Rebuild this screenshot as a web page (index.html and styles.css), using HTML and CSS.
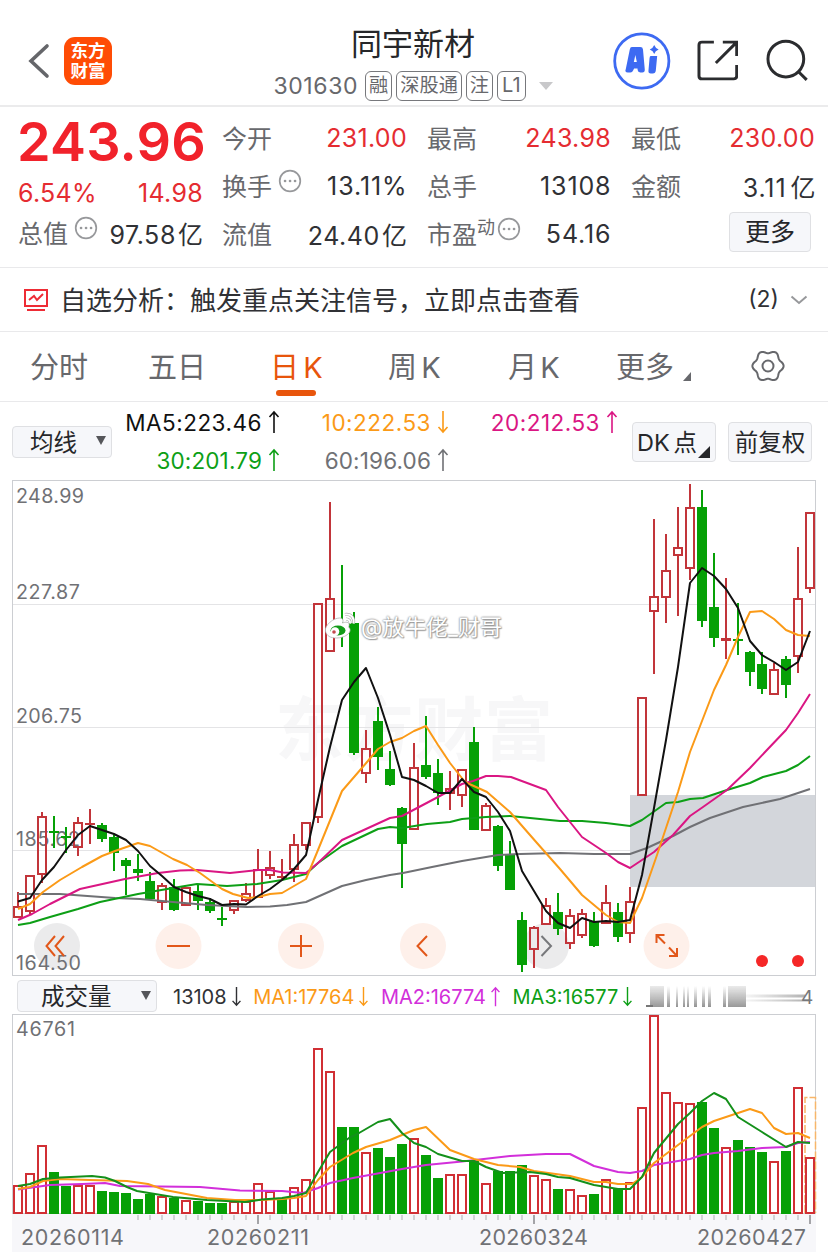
FILE: index.html
```
<!DOCTYPE html>
<html lang="zh-CN">
<head>
    <meta charset="UTF-8">
    <meta name="viewport" content="width=device-width, initial-scale=1.0">
    <title>同宇新材 301630</title>
    <link rel="stylesheet" href="styles.css">
</head>
<body>
    <header class="header">
        <div class="header-left">
            <svg class="back" width="22" height="36" viewBox="0 0 22 36"><path d="M19 3 L3 18 L19 33"/></svg>
            <div class="logo"><span>东方</span><span>财富</span></div>
        </div>
        <div class="title">
            <h1>同宇新材</h1>
            <div class="code">
                <span class="num">301630</span>
                <span class="tag">融</span>
                <span class="tag">深股通</span>
                <span class="tag">注</span>
                <span class="tag l1">L1</span>
                <i class="caret"></i>
            </div>
        </div>
        <div class="header-right">
            <svg width="58" height="58" viewBox="0 0 58 58">
                <circle cx="29" cy="29" r="27.3" fill="none" stroke="#3d6af2" stroke-width="2.8"/>
                <path d="M19 15h8.500q2.500 0 2.700 2.500l1.800 20q.2 3-2.500 3h-2q-2.500 0-2.700-2.500l-.1-1.500h-3.500l-.8 1.800q-.9 2.200-3 2.200h-2.500q-3.500 0-2-3.500l4-19.500q.5-2.500 2.100-2.500zM22.500 23l-1.500 7h3z" fill="#3d6af2" fill-rule="evenodd"/>
                <path d="M38 24h6.500l-1.400 14.500q-.3 3-3 3h-2q-2.700 0-2.400-2.800l1.100-12.500q.2-2.200 1.200-2.200zM41.500 13q1 3 4.500 4.500q-3.500 1.500-4.500 4.500q-1-3-4.500-4.500q3.500-1.500 4.500-4.500z" fill="#3d6af2"/>
            </svg>
            <svg class="line-icon" width="42" height="42" viewBox="0 0 42 42">
                <path d="M17 2H5Q2 2 2 5V36Q2 39 5 39H37Q40 39 40 36V25M26 2H40V16M39 3L19 23"/>
            </svg>
            <svg class="line-icon" width="44" height="44" viewBox="0 0 44 44">
                <circle cx="21" cy="20" r="18"/><path d="M33 32L42 41"/>
            </svg>
        </div>
    </header>

    <section class="quote">
        <div class="price-col">
            <div class="price">243.96</div>
            <div class="pair red"><span>6.54%</span><span>14.98</span></div>
            <div class="pair"><span class="label">总值<svg class="dots" viewBox="0 0 24 24"><circle cx="12" cy="12" r="10.300"/><path d="M7 12h.1M12 12h.1M17 12h.1"/></svg></span><span class="mid">97.58<b>亿</b></span></div>
        </div>
        <div class="stats">
            <div class="pair"><span class="label">今开</span><span class="red">231.00</span></div>
            <div class="pair"><span class="label">最高</span><span class="red">243.98</span></div>
            <div class="pair"><span class="label">最低</span><span class="red">230.00</span></div>
            <div class="pair"><span class="label">换手<svg class="dots" viewBox="0 0 24 24"><circle cx="12" cy="12" r="10.300"/><path d="M7 12h.1M12 12h.1M17 12h.1"/></svg></span><span class="wide">13.11%</span></div>
            <div class="pair"><span class="label">总手</span><span class="wide">13108</span></div>
            <div class="pair"><span class="label">金额</span><span class="wide">3.11<b>亿</b></span></div>
            <div class="pair"><span class="label">流值</span><span class="mid">24.40<b>亿</b></span></div>
            <div class="pair"><span class="label">市盈<small>动</small><svg class="dots tight" viewBox="0 0 24 24"><circle cx="12" cy="12" r="10.300"/><path d="M7 12h.1M12 12h.1M17 12h.1"/></svg></span><span class="wide">54.16</span></div>
            <div class="pair end"><button class="btn more">更多</button></div>
        </div>
    </section>

    <section class="notice">
        <svg width="26" height="24" viewBox="0 0 26 24"><path d="M2 2H24V18H2ZM4 22H22M6 12L11 8L14 12L20 6"/></svg>
        <p>自选分析：触发重点关注信号，立即点击查看</p>
        <span class="count">(2)</span>
        <svg class="chev" width="18" height="10" viewBox="0 0 18 10"><path d="M1.500 1.500L9 8L16.500 1.500"/></svg>
    </section>

    <nav class="tabs">
        <a>分时</a>
        <a>五日</a>
        <a class="active">日 K</a>
        <a>周 K</a>
        <a>月 K</a>
        <a class="has-corner">更多</a>
        <svg id="gear" width="34" height="34" viewBox="-17 -17 34 34"><path/><circle r="5.500"/></svg>
    </nav>

    <section class="ma-bar">
        <button class="btn select small">均线<i></i></button>
        <div class="ma-list">
            <span class="c-black">MA5:223.46<svg class="arrow" viewBox="0 0 12 24"><path d="M6 23V2M1.500 7L6 2L10.500 7"/></svg></span>
            <span class="c-orange">10:222.53<svg class="arrow" viewBox="0 0 12 24"><path d="M6 1V22M1.500 17L6 22L10.500 17"/></svg></span>
            <span class="c-pink">20:212.53<svg class="arrow" viewBox="0 0 12 24"><path d="M6 23V2M1.500 7L6 2L10.500 7"/></svg></span>
            <span class="c-green">30:201.79<svg class="arrow" viewBox="0 0 12 24"><path d="M6 23V2M1.500 7L6 2L10.500 7"/></svg></span>
            <span class="c-grey">60:196.06<svg class="arrow" viewBox="0 0 12 24"><path d="M6 23V2M1.500 7L6 2L10.500 7"/></svg></span>
        </div>
        <button class="btn dk">DK 点</button>
        <button class="btn fq">前复权</button>
    </section>

    <svg class="chart" width="828" height="496" viewBox="0 480 828 496">
        <text class="brand" x="275" y="755" textLength="278">东方财富</text>
        <path class="grid" d="M13 604.500H815M13 727.500H815M13 850.500H815"/>
        <rect x="630" y="795" width="185" height="92" fill="#d3d6db"/>
        <g class="nav-btns">
            <g fill="#ebebec"><circle cx="57" cy="946" r="23"/><circle cx="546" cy="946" r="23"/></g>
            <g fill="#fef0ea"><circle cx="178.500" cy="946" r="23"/><circle cx="301" cy="946" r="23"/><circle cx="423" cy="946" r="23"/><circle cx="666.500" cy="946" r="23"/></g>
        </g>
        <g class="axis-label">
            <text x="16" y="503" textLength="68">248.99</text>
            <text x="16" y="598.500" textLength="64">227.87</text>
            <text x="16" y="722.500" textLength="66">206.75</text>
            <text x="16" y="845.500" textLength="64">185.62</text>
            <text x="16" y="969.500" textLength="65">164.50</text>
        </g>
        <g id="candles"></g>
        <g id="maLines" class="lines"></g>
        <g class="nav-icons">
            <path d="M55 936L46.500 946L55 956M64 936L55.500 946L64 956M167 946H190M290 946H312M301 935V957M427 936L417.500 946L427 956"/>
            <path d="M656.500 943V935H664.500M657 935.500L665 943.500M669 947.500L676.500 955.500M669 956H677V948"/>
            <path class="off" d="M541.500 936L551 946L541.500 956"/>
        </g>
        <circle cx="762" cy="961" r="6" fill="#f52727"/>
        <circle cx="798" cy="961" r="6" fill="#f52727"/>
        <rect class="frame" x="12.500" y="480.500" width="803" height="495"/>
        <g class="weibo">
            <path d="M325.500 631c-1-6 8-13 14-13c4 0 4 3 3 5c5-2 8 0 6 4c5 4-2 11-12 11c-6 0-10-2-11-7z" fill="#fff" stroke="#aaa" stroke-width=".7"/>
            <ellipse cx="338" cy="630.500" rx="7.500" ry="5" fill="#129b18"/>
            <circle cx="335" cy="631.500" r="4.300" fill="#fff"/>
            <circle cx="334" cy="632" r="1.800" fill="#c2484d"/>
            <path d="M345 614.500c6-1 9.500 3 8.500 9M346 619c3 0 4.500 2 4 4.500" fill="none" stroke="#aaa" stroke-width="3"/>
            <path d="M345 614.500c6-1 9.500 3 8.500 9M346 619c3 0 4.500 2 4 4.500" fill="none" stroke="#fff" stroke-width="1.800"/>
            <text x="361" y="635" textLength="141">@放牛佬_财哥</text>
        </g>
    </svg>

    <section class="vol-bar">
        <button class="btn select vol">成交量<i></i></button>
        <span class="c-dark">13108<svg class="arrow" viewBox="0 0 12 24"><path d="M6 1V22M1.500 17L6 22L10.500 17"/></svg></span>
        <span class="c-orange">MA1:17764<svg class="arrow" viewBox="0 0 12 24"><path d="M6 1V22M1.500 17L6 22L10.500 17"/></svg></span>
        <span class="c-purple">MA2:16774<svg class="arrow" viewBox="0 0 12 24"><path d="M6 23V2M1.500 7L6 2L10.500 7"/></svg></span>
        <span class="c-green">MA3:16577<svg class="arrow" viewBox="0 0 12 24"><path d="M6 1V22M1.500 17L6 22L10.500 17"/></svg></span>
        <svg class="smear" width="168" height="24" viewBox="646 984 168 24">
            <defs>
                <linearGradient id="fade" x2="0" y2="1"><stop offset="0" stop-color="#888" stop-opacity="0"/><stop offset="1" stop-color="#777" stop-opacity=".8"/></linearGradient>
                <linearGradient id="side"><stop offset="0" stop-color="#999" stop-opacity=".1"/><stop offset="1" stop-color="#888" stop-opacity=".7"/></linearGradient>
                <filter id="soft"><feGaussianBlur stdDeviation=".7"/></filter>
            </defs>
            <g filter="url(#soft)">
                <path fill="url(#fade)" d="M650 985h14v21h-14zM667 985h3v21h-3zM676 985h2v21h-2zM683 985h2v21h-2zM687 985h2v21h-2zM694 985h3v21h-3zM702 985h3v21h-3zM708 985h3v21h-3zM723 985h3v21h-3zM728 985h18v21h-18z"/>
                <path fill="#aaa" opacity=".25" d="M650 985h14v21h-14zM728 985h18v21h-18z"/>
                <path fill="#777" d="M646 1004h7v2h-7z"/>
                <path fill="url(#side)" d="M746 993.500h59v3h-59zM746 998.500h64v2h-64z"/>
            </g>
            <text x="801" y="1003">4</text>
        </svg>
    </section>

    <svg class="chart" width="828" height="238" viewBox="0 1014 828 238">
        <rect x="12" y="1214" width="804" height="38" fill="#f7f7fa"/>
        <rect class="frame" x="12.500" y="1014.500" width="803" height="199"/>
        <text class="axis-label" x="16" y="1035.500" textLength="59">46761</text>
        <path d="M805 1213V1097.500H815.500V1213" fill="none" stroke="#f8b66a" stroke-width="1.500" stroke-dasharray="8 2"/>
        <g id="volumes"></g>
        <g id="volLines" class="lines"></g>
        <g id="ticks"></g>
        <g class="date">
            <text x="21" y="1245" textLength="103">20260114</text>
            <text x="207" y="1245" textLength="102">20260211</text>
            <text x="479" y="1245" textLength="109">20260324</text>
            <text x="697" y="1245" textLength="109">20260427</text>
        </g>
    </svg>

    <script src="chart.js"></script>
</body>
</html>
```
FILE: styles.css
```
* {
    box-sizing: border-box;
}

body {
    margin: 0;
    width: 828px;
    height: 1252px;
    overflow: hidden;
    background: #fff;
    color: #303135;
    font-family: Inter, "Noto Sans CJK SC", sans-serif;
    font-size: 25px;
}

.header {
    display: flex;
    height: 107px;
    padding: 0 19px 0 28px;
    border-bottom: 2px solid #ebebec;
}

.header-left, .header-right {
    display: flex;
    align-items: center;
    padding-top: 17px;
    width: 196px;
}

.header-left {
    width: 246px;
}

.header-right {
    gap: 26px;
    margin-left: auto;
}

.header-right svg:last-child {
    margin-left: 1px;
}

.back {
    fill: none;
    stroke: #65666a;
    stroke-width: 3.600;
    stroke-linecap: round;
}

.logo {
    display: flex;
    flex-direction: column;
    justify-content: center;
    align-items: center;
    width: 48px;
    height: 48px;
    margin-left: 14px;
    border-radius: 11px;
    background: #ff4c05;
    color: #fff;
    font-size: 17.5px;
    font-weight: 700;
    line-height: 20px;
}

.line-icon {
    fill: none;
    stroke: #2b2c2f;
    stroke-width: 3;
}

.title {
    display: flex;
    flex-direction: column;
    align-items: center;
    width: 278px;
    padding-top: 26px;
}

.title h1 {
    margin: 0;
    font-size: 31px;
    font-weight: 400;
    line-height: 36px;
    color: #26272a;
}

.code {
    display: flex;
    align-items: center;
    gap: 4px;
    height: 30px;
    margin-top: 9px;
    color: #67686c;
    white-space: nowrap;
}

.num {
    font-size: 23px;
    letter-spacing: .6px;
    margin-right: 3px;
}

.tag {
    flex: none;
    height: 30px;
    padding: 0 3px;
    border: 1px solid #77787c;
    border-radius: 6px;
    font-size: 19.2px;
    line-height: 27px;
}

.l1 {
    padding: 0 4px;
    font-size: 20px;
}

.caret {
    margin-left: 9px;
    border: 7px solid transparent;
    border-top: 8px solid #c8c8ca;
    border-bottom: 0;
}

.red {
    color: #e52c31;
}

.quote {
    display: flex;
    height: 161px;
    border-bottom: 1px solid #e9e9eb;
    padding: 7px 13px 0 18px;
}

.price-col {
    width: 185px;
    margin-right: 19px;
}

.price {
    height: 55px;
    line-height: 56px;
    font-size: 54px;
    font-weight: 600;
    letter-spacing: .2px;
    margin-left: -1px;
    color: #f1222b;
}

.stats {
    flex: 1;
    display: grid;
    grid-template-columns: 185px 184px 184px;
    column-gap: 20px;
    grid-auto-rows: 48px;
    align-content: start;
}

.pair {
    display: flex;
    justify-content: space-between;
    align-items: center;
    height: 48px;
    letter-spacing: .3px;
    white-space: nowrap;
}

.pair .wide {
    letter-spacing: .9px;
    margin-right: -.5px;
}

.pair .mid {
    letter-spacing: .6px;
}

.price-col .pair {
    height: 41px;
}

.price-col .pair.red {
    padding-top: 6px;
}

.pair b {
    font-weight: 400;
    margin-left: 2px;
    letter-spacing: 0;
}

.wide b {
    margin-left: 4px;
}

.price-col .pair:last-child {
    padding-top: 5px;
}

.label {
    display: flex;
    align-items: center;
    color: #68696d;
    letter-spacing: 0;
    margin-top: -2px;
}

.label small {
    font-size: 18px;
    margin-bottom: 15px;
}

.dots {
    width: 24px;
    height: 24px;
    margin: 0 0 8px 6px;
    fill: none;
    stroke: #97989b;
    stroke-width: 1.7;
    stroke-linecap: round;
}

.dots path {
    stroke-width: 2.6;
}

.dots.tight {
    margin-left: 2px;
}

.end {
    justify-content: flex-end;
    padding-right: 4px;
}

.btn {
    border: 1px solid #dfe0e3;
    border-radius: 4px;
    background: #f6f7fa;
    color: #26272a;
    font: inherit;
    padding: 0;
}

.more {
    width: 82px;
    height: 40px;
    line-height: 38px;
    margin-top: -4px;
}

.notice {
    display: flex;
    align-items: center;
    height: 64px;
    padding: 0 20px 0 23px;
    border-bottom: 1px solid #e9e9eb;
}

.notice svg {
    fill: none;
    stroke: #ee2c35;
    stroke-width: 2;
}

.notice p {
    flex: 1;
    margin: -2px 0 0 11px;
    font-size: 26px;
}

.notice .count {
    font-size: 23px;
    margin: -2px 11px 0 0;
}

.notice .chev {
    stroke: #97989b;
}

.tabs {
    display: flex;
    align-items: center;
    height: 70px;
    padding: 0 43px 0 30px;
    border-bottom: 1px solid #e9e9eb;
    font-size: 29px;
    color: #67686c;
}

.tabs a {
    position: relative;
    width: 118px;
    padding-bottom: 3px;
    white-space: pre;
}

.tabs a:nth-child(3) {
    width: 119px;
    padding-left: 4px;
    word-spacing: -4px;
}

.tabs a:nth-child(4) {
    width: 119px;
    padding-left: 3px;
    word-spacing: -4px;
}

.tabs a:nth-child(5) {
    width: 112px;
    padding-left: 4px;
    word-spacing: -5px;
}

.tabs a:nth-child(6) {
    width: 135px;
}

.tabs .active {
    color: #e8550c;
}

.active::after {
    content: "";
    position: absolute;
    left: 10px;
    bottom: -7px;
    width: 40px;
    height: 6px;
    border-radius: 3px;
    background: #e8550c;
}

.has-corner::after {
    content: "";
    position: absolute;
    left: 67px;
    bottom: 8px;
    border-left: 8px solid transparent;
    border-bottom: 9px solid #67686c;
}

#gear {
    margin-top: -1px;
    fill: none;
    stroke: #67686c;
    stroke-width: 2;
}

.ma-bar {
    display: flex;
    height: 78px;
    padding: 0 16px 0 12px;
}

.select {
    display: flex;
    align-items: center;
    justify-content: space-between;
}

.select i {
    border: 5px solid transparent;
    border-top: 9px solid #55565a;
    border-bottom: 0;
}

.small {
    width: 100px;
    height: 32px;
    margin-top: 24px;
    padding: 0 5px 3px 17px;
    font-size: 23.5px;
}

.ma-list {
    display: grid;
    grid-template-columns: 168px 169px 169px;
    grid-auto-rows: 38px;
    justify-items: end;
    align-items: center;
    padding-top: 1px;
    font-size: 22.5px;
    letter-spacing: .5px;
}

.ma-list span:nth-child(n+4) {
    letter-spacing: .15px;
}

.ma-list span, .vol-bar span {
    display: flex;
    align-items: center;
    white-space: nowrap;
}

.arrow {
    width: 12px;
    height: 24px;
    margin-left: 6px;
    fill: none;
    stroke: currentColor;
    stroke-width: 1.6;
}

.dk {
    position: relative;
    width: 84px;
    height: 40px;
    margin: 20px 12px 0 14px;
    padding: 0 14px 3px 0;
    font-size: 23.5px;
    word-spacing: -3px;
    white-space: nowrap;
}

.dk::after {
    content: "";
    position: absolute;
    right: 5px;
    bottom: 3px;
    border-left: 12px solid transparent;
    border-bottom: 12px solid #26272a;
}

.fq {
    width: 84px;
    height: 40px;
    margin-top: 20px;
    padding-bottom: 3px;
    font-size: 23.5px;
}

.c-black { color: #111; }
.c-dark { color: #303135; }
.c-orange { color: #fb9a17; }
.c-pink { color: #da1683; }
.c-green { color: #0d9f16; }
.c-grey { color: #707175; }
.c-purple { color: #d22fda; }

.chart {
    display: block;
}

.frame {
    fill: none;
    stroke: #ccced2;
}

.grid {
    stroke: #e4e4e6;
}

.brand {
    font-size: 69px;
    font-weight: 700;
    fill: #f7f7f8;
}

.axis-label {
    font-size: 19.7px;
    fill: #707175;
}

.date {
    font-size: 21.5px;
    fill: #707175;
}

.lines {
    fill: none;
    stroke-width: 2;
    stroke-linejoin: round;
}

.nav-icons {
    fill: none;
    stroke: #e2571a;
    stroke-width: 2;
}

.nav-icons .off {
    stroke: #77787b;
}

.weibo text {
    font-size: 22px;
    fill: #fff;
    text-shadow: 0 0 2px #888, 0 0 2px #999, 1px 1px 1px #aaa;
}

.vol-bar {
    display: flex;
    align-items: center;
    height: 38px;
    padding: 3px 14px 0 17px;
    font-size: 20px;
}

.vol-bar .arrow {
    width: 11px;
    height: 21px;
    margin-left: 4px;
}

.vol-bar span {
    margin-right: 11.5px;
}

.vol {
    width: 140px;
    height: 32px;
    margin: -1px 16px 0 0;
    padding: 0 5px 2px 23px;
    font-size: 23.5px;
}

.smear {
    margin-left: auto;
    font-size: 19px;
    fill: #77787b;
}
```
FILE: chart.js
```
const NS = 'http://www.w3.org/2000/svg';
const RED = '#c2353a';
const GREEN = '#06a006';

// [high, body top, body bottom, low, up?, volume top]
const days = [
    [892, 907, 917, 917, 1, 1186], [875, 876, 911, 914, 1, 1174], [812, 817, 874, 883, 1, 1146],
    [816, 831, 832, 848, 0, 1172], [827, 836, 837, 853, 0, 1186], [817, 823, 847, 856, 1, 1186],
    [809, 823, 825, 844, 1, 1186], [823, 825, 839, 842, 0, 1191], [835, 837, 853, 871, 0, 1192],
    [858, 860, 866, 895, 0, 1193], [854, 869, 873, 881, 0, 1199], [872, 881, 899, 900, 0, 1194],
    [883, 886, 902, 910, 1, 1197], [879, 887, 910, 911, 0, 1198], [887, 888, 905, 906, 1, 1201],
    [884, 891, 901, 910, 0, 1201], [898, 902, 911, 913, 0, 1203], [907, 918, 919, 926, 0, 1203],
    [900, 901, 910, 914, 1, 1202], [883, 894, 900, 902, 1, 1202], [849, 870, 897, 897, 1, 1184],
    [851, 868, 875, 879, 1, 1192], [859, 876, 878, 879, 1, 1198, 'g'], [834, 845, 869, 882, 1, 1188],
    [823, 823, 845, 850, 1, 1180], [604, 604, 817, 823, 1, 1049], [502, 599, 651, 652, 1, 1072],
    [565, 626, 635, 647, 0, 1127], [612, 623, 753, 755, 0, 1127], [730, 749, 773, 783, 1, 1153],
    [707, 721, 757, 770, 0, 1148], [751, 769, 785, 786, 0, 1157], [807, 808, 844, 888, 0, 1144],
    [743, 768, 829, 829, 1, 1139], [716, 765, 777, 779, 0, 1155], [759, 773, 793, 805, 0, 1178],
    [771, 789, 793, 810, 1, 1175], [770, 770, 795, 807, 1, 1175], [727, 742, 830, 830, 0, 1160],
    [803, 806, 830, 830, 1, 1184], [825, 826, 866, 871, 0, 1171], [841, 854, 890, 890, 0, 1171],
    [912, 920, 965, 972, 0, 1165], [926, 928, 949, 968, 1, 1176], [898, 906, 924, 924, 1, 1180],
    [893, 912, 929, 935, 0, 1189], [909, 916, 943, 949, 1, 1190], [909, 914, 935, 938, 1, 1196],
    [912, 921, 946, 947, 0, 1194], [885, 903, 923, 923, 1, 1180], [903, 912, 937, 942, 0, 1189],
    [887, 902, 933, 943, 1, 1183], [698, 698, 795, 795, 1, 1108], [519, 597, 611, 674, 1, 1016],
    [534, 571, 597, 623, 1, 1093], [507, 548, 555, 616, 1, 1103], [484, 508, 568, 580, 1, 1104],
    [490, 507, 621, 627, 0, 1102], [553, 607, 638, 647, 0, 1128], [578, 638, 641, 659, 1, 1148],
    [603, 639, 640, 655, 0, 1140], [651, 652, 672, 686, 0, 1147], [652, 664, 689, 694, 0, 1152],
    [663, 670, 694, 695, 1, 1162], [656, 659, 685, 698, 0, 1151], [547, 599, 656, 673, 1, 1088],
    [513, 513, 588, 593, 1, 1158]
];

const maLines = {
    '#707175': '18,894 60,894 115,898 140,899 173,902 207,905 247,907 270,906.500 287,905 306,902 342,886 366,880 390,875 403,873 432,867 462,861 498,855 520,854 560,853 594,854 630,854 647,848 673,836 690,827 710,818 743,807 780,799 798,793 810,789',
    '#0d9f16': '18,925 30,923 50,917 78,909 100,902 138,894 173,888 197,884 227,886 257,884 282,880 306,874 318,863 342,846 378,829 390,827 402,828 427,824 450,822 462,819 486,817 510,816 530,818 560,821 582,821 606,823 630,826 642,820 666,803 678,802 690,799 703,798 727,790 750,783 763,777 786,771 798,765 810,756',
    '#da1683': '18,920 32,914 50,904 80,889 125,879 158,873 180,870.500 197,870 230,873 258,870 270,870 283,872.500 306,873 318,863 342,840 390,818 402,816 438,797 462,784 473,781 486,776 498,776 511,777 546,790 558,807 582,837 606,853 618,862 630,868 642,860 654,852 673,835 690,816 703,807 727,790 750,768 766,751 786,730 798,713 810,694',
    '#fb9a17': '18,909 30,904 43,892 60,880 82,867 102,856 115,851 138,843 150,846 173,859 187,865 200,873 222,889 233,894 248,898 258,897 270,894 282,893 306,879 318,850 342,791 367,762 378,749 390,742 402,738 414,731 426,726 438,745 450,763 465,782 487,792 510,812 523,827 537,843 560,869 582,895 606,915 618,922 630,923 642,898 657,855 678,792 690,752 714,690 726,665 738,637 750,612 762,611 774,619 786,630 798,635 810,636',
    '#111': '18,901.500 30,898 42,880 54,867 66,850 78,835 90,826 102,830 114,834 126,840 138,851 150,866 162,876 174,887 186,892 198,896 210,899 222,905 234,904 246,904.500 258,896 270,889 282,880 294,869 306,855 318,800 330,747 342,700 354,682 366,668 378,698 390,735 402,777 414,780 426,786 438,793 450,793 462,779 474,792 486,797 498,812 510,831 522,871 534,891 546,911 558,923 570,928 582,918 594,922 606,921 618,922 630,920 642,875 654,808 666,740 678,667 690,583 702,568 714,576 726,589 738,608 750,641 762,655 774,662 786,670 798,662 810,631'
};

const volLines = {
    '#d22fda': '18,1189.500 50,1185 82,1184 105,1183 120,1186 200,1187 240,1190.500 282,1191 303,1193 318,1188 330,1183 353,1178 402,1169 426,1165 462,1161.500 510,1156 546,1154 570,1154 594,1166 618,1172 630,1173 642,1171 654,1165 690,1159 702,1155 714,1153 738,1151 762,1148 786,1147 798,1143 810,1142',
    '#fb9a17': '18,1189 30,1187 43,1181 60,1179 90,1180 127,1181 148,1184 165,1190 207,1198 235,1200 262,1200 282,1199 294,1198 306,1196 318,1180 330,1167 353,1153 366,1147 390,1140 414,1130 426,1127 450,1150 474,1159 498,1165 520,1167 534,1171 570,1176 594,1182 606,1182 618,1184 632,1184 642,1177 654,1163 678,1145 702,1127 714,1121 726,1117 750,1109 762,1113 774,1128 786,1134 798,1133 810,1138',
    '#14901a': '18,1186 30,1184 43,1179 60,1177.500 92,1176 105,1177.500 115,1181 127,1187 137,1191 173,1197 207,1200 245,1202 262,1199.500 282,1198 294,1196 306,1193 318,1172 330,1152 349,1138 359,1133 378,1122 390,1119 402,1133 414,1143 426,1147 438,1154 462,1161 474,1161 486,1167 503,1173 530,1172 546,1174 558,1177 570,1178 594,1185 618,1189 630,1189 642,1177 654,1153 678,1124 690,1113 702,1101 714,1093 726,1099 738,1117 762,1132 786,1147 798,1142 810,1143'
};

function add(parent, tag, attrs) {
    const el = document.createElementNS(NS, tag);
    for (const key in attrs) el.setAttribute(key, attrs[key]);
    document.getElementById(parent).appendChild(el);
}

function bar(parent, x, top, bottom, up, color) {
    if (up && bottom - top > 3) {
        add(parent, 'rect', { x: x - 4, y: top, width: 8, height: bottom - top, fill: 'none', stroke: color, 'stroke-width': 2 });
    } else {
        add(parent, 'rect', { x: x - 5, y: top, width: 10, height: Math.max(2, bottom - top), fill: color });
    }
}

days.forEach(([high, top, bottom, low, up, vol, volColor], i) => {
    const x = 18 + i * 12;
    const color = up ? RED : GREEN;
    add('candles', 'path', { d: `M${x} ${high}V${top}M${x} ${bottom}V${low}`, stroke: color, 'stroke-width': 2 });
    bar('candles', x, top, bottom, up, color);
    const volUp = up && !volColor;
    bar('volumes', x, vol, volUp ? 1213 : 1214, volUp, volUp ? '#d12f34' : GREEN);
    if (x >= 138) {
        const major = x === 258 || x === 534 || x === 810;
        add('ticks', 'path', { d: `M${x} 1215V${major ? 1224 : 1220}`, stroke: major ? '#88898d' : '#c6c7ca', 'stroke-width': 1.5 });
    }
});

for (const color in maLines) add('maLines', 'polyline', { points: maLines[color], stroke: color });
for (const color in volLines) add('volLines', 'polyline', { points: volLines[color], stroke: color });

// settings gear outline
let d = '';
for (let a = 0; a <= 360; a += 3) {
    const t = a * Math.PI / 180;
    const r = 14.2 + 1.4 * Math.cos(6 * t);
    d += (a ? 'L' : 'M') + (r * Math.cos(t)).toFixed(2) + ' ' + (r * Math.sin(t)).toFixed(2);
}
document.querySelector('#gear path').setAttribute('d', d + 'Z');
```
